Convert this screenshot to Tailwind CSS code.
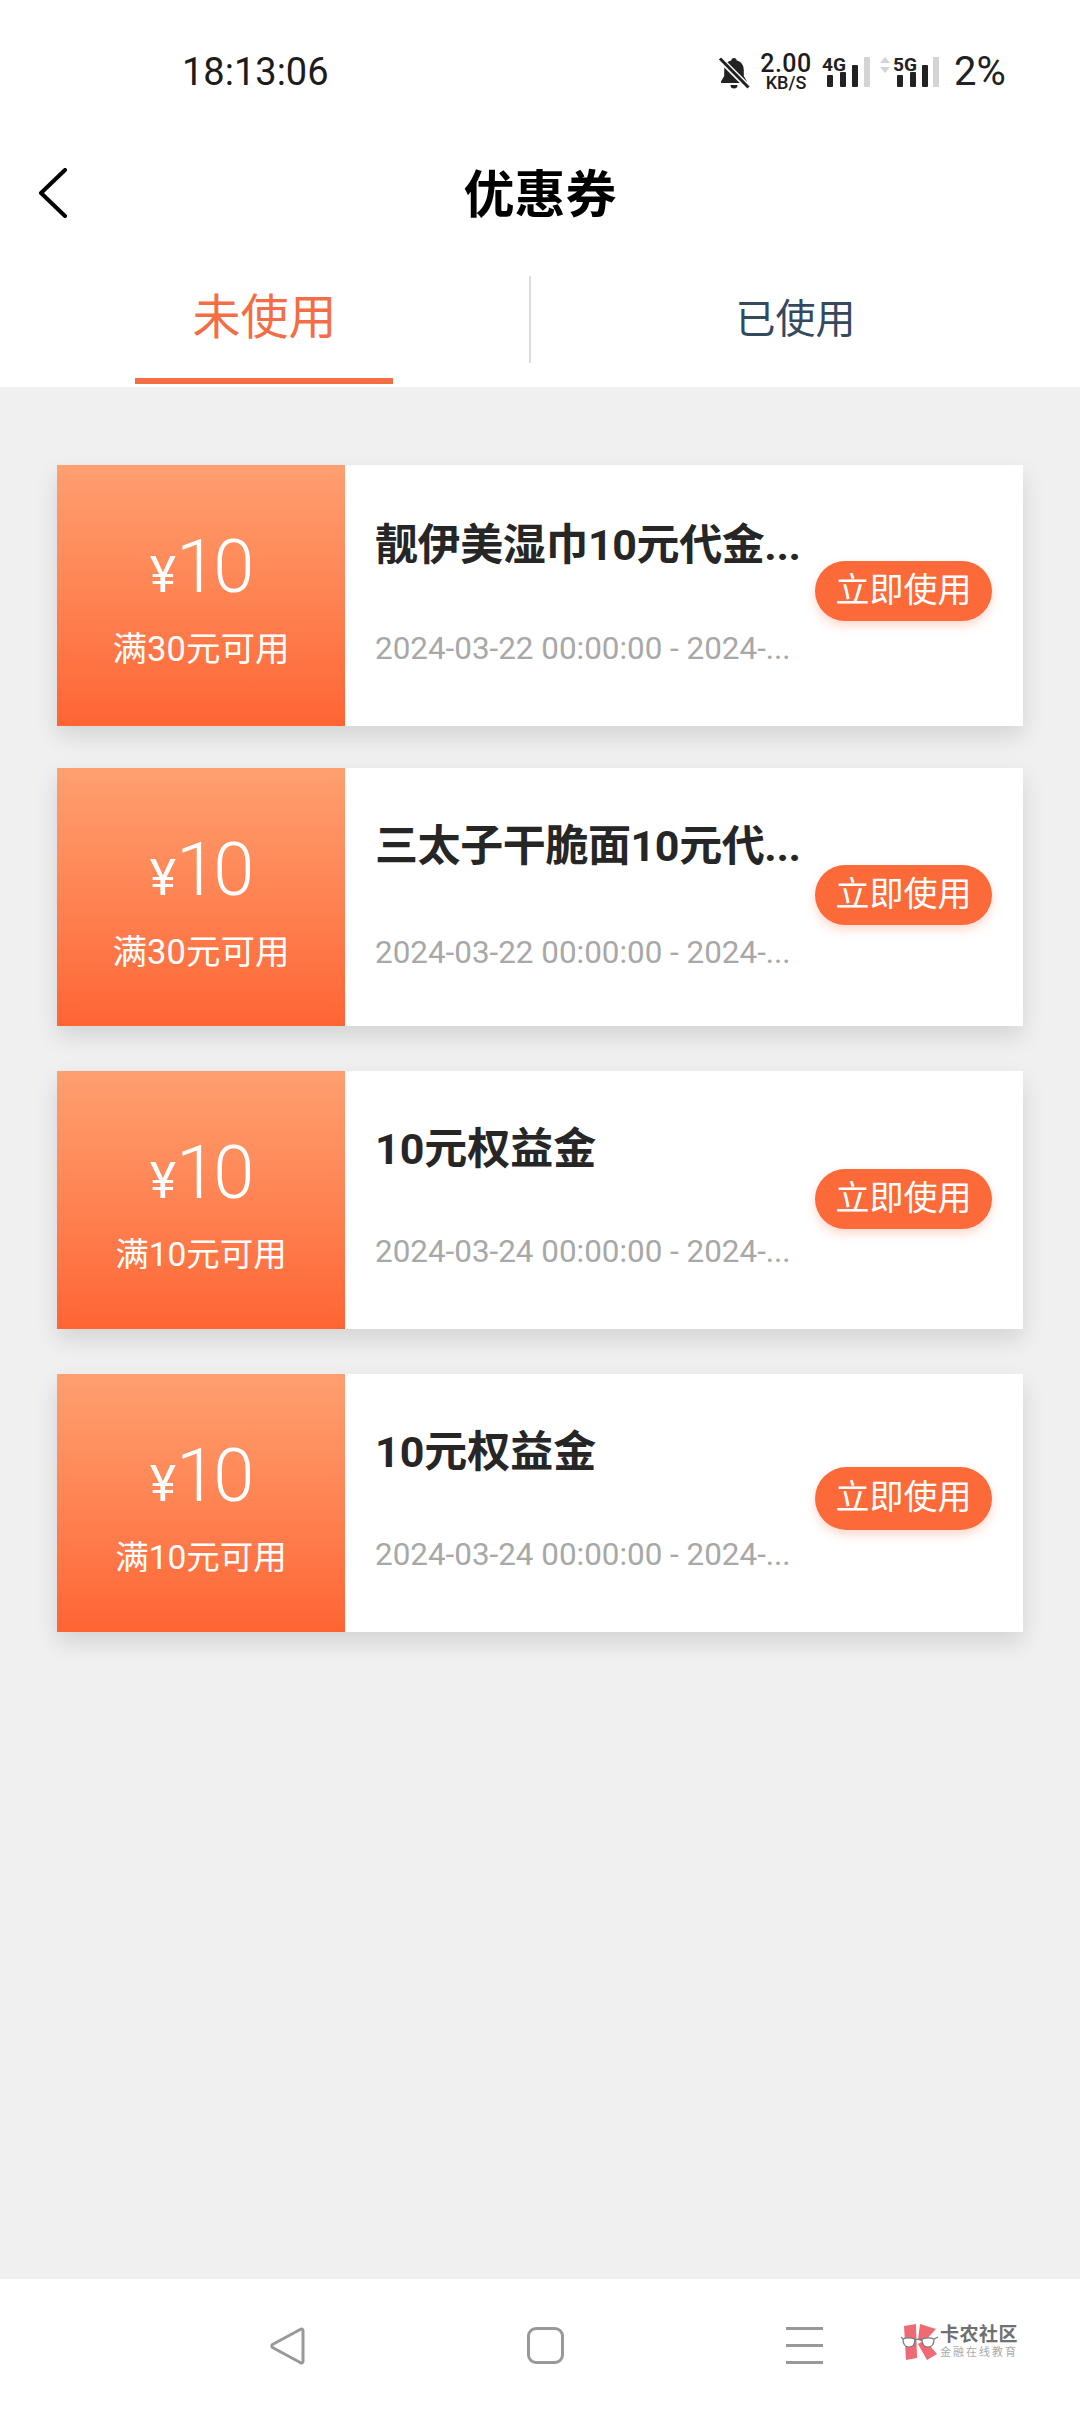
<!doctype html>
<html lang="zh"><head><meta charset="utf-8"><script src="https://cdn.jsdelivr.net/npm/@tailwindcss/browser@4"></script></head>
<body class="m-0">
<div class="w-[1080px] h-[2412px] flex flex-col bg-[#f0f0f0] font-['Roboto','Noto_Sans_CJK_SC',sans-serif] overflow-hidden">
  <div class="bg-white shrink-0">
    <!-- status bar -->
    <div class="h-[143px] flex items-start pt-[50px] text-[#1c1c1c]">
      <div class="ml-[182px] w-[536px] text-[38px] leading-[44px] font-['Roboto']">18:13:06</div>
      <svg class="mt-[7px]" width="32" height="32" viewBox="0 0 32 32"><path d="M16 1c1.600 0 2.600 1 2.800 2.400 4.600 1.200 7 5 7 9.600v6l3.200 5.500v1.500H3v-1.500l3.200-5.500v-6c0-4.600 2.400-8.400 7-9.600C13.400 2 14.400 1 16 1z" fill="#222"/><path d="M12.500 28h7a3.500 3.500 0 0 1-7 0z" fill="#222"/><path d="M2 2l28 28" stroke="#fff" stroke-width="6"/><path d="M2 1.500l28.500 29" stroke="#222" stroke-width="3"/></svg>
      <div class="ml-[10px] w-[52px] flex flex-col items-center mt-[3px]">
        <span class="text-[25px] leading-[21px] font-medium tracking-[0.5px]">2.00</span>
        <span class="text-[18px] leading-[17px] font-medium">KB/S</span>
      </div>
      <svg class="ml-[10px] -mt-[1px]" width="48" height="40" viewBox="0 -6 48 40"><text x="0" y="16" font-family="Roboto" font-size="19" font-weight="700" fill="#222" textLength="24" lengthAdjust="spacingAndGlyphs">4G</text><rect x="5" y="20" width="6" height="12" rx="1" fill="#222"/><rect x="18" y="17" width="6" height="15" rx="1" fill="#222"/><rect x="30" y="10" width="6" height="22" rx="1" fill="#222"/><rect x="42" y="2" width="6" height="30" rx="1" fill="#d4d4d4"/></svg>
      <svg class="ml-[10px] -mt-[1px]" width="60" height="40" viewBox="0 -6 60 40"><path d="M5 2l5 6H0zM5 18l5-6H0z" fill="#d4d4d4"/><text x="13" y="16" font-family="Roboto" font-size="19" font-weight="700" fill="#222" textLength="24" lengthAdjust="spacingAndGlyphs">5G</text><rect x="17" y="20" width="6" height="12" rx="1" fill="#222"/><rect x="30" y="17" width="6" height="15" rx="1" fill="#222"/><rect x="42" y="10" width="6" height="22" rx="1" fill="#222"/><rect x="53" y="2" width="6" height="30" rx="1" fill="#d4d4d4"/></svg>
      <span class="ml-[14px] text-[40px] leading-[44px] font-['Roboto'] text-[#222]">2%</span>
    </div>
    <!-- title -->
    <div class="relative h-[100px] flex items-center justify-center">
      <svg class="absolute left-[36px] top-[25px]" width="32" height="50" viewBox="0 0 32 50"><path d="M29 2L5 25l24 23" fill="none" stroke="#000" stroke-width="4" stroke-linecap="round" stroke-linejoin="round"/></svg>
      <h1 class="text-[51px] leading-[60px] font-bold text-black pt-[6px]">优惠券</h1>
    </div>
    <!-- tabs -->
    <div class="h-[144px] flex pt-[33px]">
      <div class="w-[529px] flex flex-col items-center">
        <div class="h-[78px] w-[258px] text-center text-[48px] leading-[84px] text-[#f46e45] mb-[24px]">未使用</div>
        <div class="h-[6px] w-[258px] bg-[#f46e45] -ml-[1px]"></div>
      </div>
      <div class="w-[2px] h-[87px] bg-[#dcdcdc]"></div>
      <div class="flex-1 text-center text-[40px] leading-[60px] pt-[14px] pr-[20px] text-[#34495e]">已使用</div>
    </div>
  </div>
  <!-- coupons -->
  <main class="flex-1 px-[57px] pt-[78px] flex flex-col gap-[45px]">
    <article class="h-[261px] -mb-[3px] flex bg-white shadow-[0_10px_22px_rgba(0,0,0,0.12)]">
      <div class="w-[288px] shrink-0 flex flex-col items-center bg-gradient-to-b from-[#ff9f6f] to-[#ff6433] text-white pt-[57px]">
        <div class="flex items-baseline leading-[90px]"><span class="text-[50px] pl-[2px]">¥</span><span class="text-[74px] font-light tracking-[-4px] pr-[4px]">10</span></div>
        <div class="text-[34.5px] leading-[44px] mt-[7px]">满30元可用</div>
      </div>
      <div class="flex-1 flex items-center pl-[30px] pr-[30px]">
        <div class="w-[440px] self-start pt-[50px]">
          <div class="text-[43px] leading-[60px] font-bold text-[#262626] tracking-[-0.4px] whitespace-nowrap">靓伊美湿巾10元代金...</div>
          <div class="text-[31.4px] leading-[40px] mt-[54px] text-[#a8a8a8] whitespace-nowrap">2024-03-22 00:00:00 - 2024-...</div>
        </div>
        <div class="w-[177px] h-[60px] mb-[9px] rounded-full bg-[#fd6a3a] text-white text-center text-[34px] leading-[58px] shadow-[0_5px_10px_rgba(253,106,58,0.25)] shrink-0 whitespace-nowrap">立即使用</div>
      </div>
    </article>
    <article class="h-[258px] flex bg-white shadow-[0_10px_22px_rgba(0,0,0,0.12)]">
      <div class="w-[288px] shrink-0 flex flex-col items-center bg-gradient-to-b from-[#ff9f6f] to-[#ff6433] text-white pt-[57px]">
        <div class="flex items-baseline leading-[90px]"><span class="text-[50px] pl-[2px]">¥</span><span class="text-[74px] font-light tracking-[-4px] pr-[4px]">10</span></div>
        <div class="text-[34.5px] leading-[44px] mt-[7px]">满30元可用</div>
      </div>
      <div class="flex-1 flex items-center pl-[30px] pr-[30px]">
        <div class="w-[440px] self-start pt-[48px]">
          <div class="text-[43px] leading-[60px] font-bold text-[#262626] tracking-[-0.4px] whitespace-nowrap">三太子干脆面10元代...</div>
          <div class="text-[31.4px] leading-[40px] mt-[57px] text-[#a8a8a8] whitespace-nowrap">2024-03-22 00:00:00 - 2024-...</div>
        </div>
        <div class="w-[177px] h-[60px] mb-[4px] rounded-full bg-[#fd6a3a] text-white text-center text-[34px] leading-[58px] shadow-[0_5px_10px_rgba(253,106,58,0.25)] shrink-0 whitespace-nowrap">立即使用</div>
      </div>
    </article>
    <article class="h-[258px] flex bg-white shadow-[0_10px_22px_rgba(0,0,0,0.12)]">
      <div class="w-[288px] shrink-0 flex flex-col items-center bg-gradient-to-b from-[#ff9f6f] to-[#ff6433] text-white pt-[57px]">
        <div class="flex items-baseline leading-[90px]"><span class="text-[50px] pl-[2px]">¥</span><span class="text-[74px] font-light tracking-[-4px] pr-[4px]">10</span></div>
        <div class="text-[33.5px] leading-[44px] mt-[7px]">满10元可用</div>
      </div>
      <div class="flex-1 flex items-center pl-[30px] pr-[30px]">
        <div class="w-[440px] self-start pt-[48px]">
          <div class="text-[43px] leading-[60px] font-bold text-[#262626] whitespace-nowrap">10元权益金</div>
          <div class="text-[31.4px] leading-[40px] mt-[53px] text-[#a8a8a8] whitespace-nowrap">2024-03-24 00:00:00 - 2024-...</div>
        </div>
        <div class="w-[177px] h-[60px] mb-[3px] rounded-full bg-[#fd6a3a] text-white text-center text-[34px] leading-[58px] shadow-[0_5px_10px_rgba(253,106,58,0.25)] shrink-0 whitespace-nowrap">立即使用</div>
      </div>
    </article>
    <article class="h-[258px] flex bg-white shadow-[0_10px_22px_rgba(0,0,0,0.12)]">
      <div class="w-[288px] shrink-0 flex flex-col items-center bg-gradient-to-b from-[#ff9f6f] to-[#ff6433] text-white pt-[57px]">
        <div class="flex items-baseline leading-[90px]"><span class="text-[50px] pl-[2px]">¥</span><span class="text-[74px] font-light tracking-[-4px] pr-[4px]">10</span></div>
        <div class="text-[33.5px] leading-[44px] mt-[7px]">满10元可用</div>
      </div>
      <div class="flex-1 flex items-center pl-[30px] pr-[30px]">
        <div class="w-[440px] self-start pt-[48px]">
          <div class="text-[43px] leading-[60px] font-bold text-[#262626] whitespace-nowrap">10元权益金</div>
          <div class="text-[31.4px] leading-[40px] mt-[53px] text-[#a8a8a8] whitespace-nowrap">2024-03-24 00:00:00 - 2024-...</div>
        </div>
        <div class="w-[177px] h-[63px] mb-[9px] rounded-full bg-[#fd6a3a] text-white text-center text-[34px] leading-[61px] shadow-[0_5px_10px_rgba(253,106,58,0.25)] shrink-0 whitespace-nowrap">立即使用</div>
      </div>
    </article>
  </main>
  <!-- nav -->
  <nav class="h-[133px] shrink-0 bg-white flex items-start pt-[48px] pl-[270px]">
    <svg width="36" height="38" viewBox="0 0 36 38"><path d="M33 3.500V34.500c0 1.500-1.500 2-2.800 1L2.500 20.500c-1-.8-1-2.200 0-3L30.200 2.500C31.500 1.500 33 2 33 3.500z" fill="none" stroke="#999" stroke-width="3" stroke-linejoin="round"/></svg>
    <div class="ml-[221px] w-[37px] h-[37px] rounded-[9px] border-[3px] border-[#999]"></div>
    <div class="ml-[222px] w-[37px] h-[37px] flex flex-col justify-between">
      <div class="h-[3px] bg-[#999]"></div><div class="h-[3px] bg-[#999]"></div><div class="h-[3px] bg-[#999]"></div>
    </div>
    <svg class="ml-[78px] -mt-[3px]" width="38" height="36" viewBox="0 0 38 36"><path d="M3 2l12-2 1 34-11 2z" fill="#ee6a74"/><path d="M19 0l16 5-12 13-6-2zM17 20l7-4 12 14-10 6z" fill="#ee6a74"/><path d="M2 15c4-2 9-1 12 0 0 5-2 8-6 8s-6-3-6-8zM21 15c3-1 8-2 12 0 0 5-2 8-6 8s-6-3-6-8z" fill="#fff" stroke="#777" stroke-width="1.200"/><path d="M14 16c2-1 5-1 7 0M0 13l2 2M33 15l4-2" fill="none" stroke="#777" stroke-width="1.200"/></svg>
    <div class="ml-[1px] -mt-[3px] flex flex-col w-[80px]">
      <span class="text-[19px] leading-[22px] font-bold text-[#707070] tracking-[0.5px] whitespace-nowrap">卡农社区</span>
      <span class="text-[11px] leading-[14px] text-[#aaaaaa] tracking-[2px] whitespace-nowrap">金融在线教育</span>
    </div>
  </nav>
</div>
</body></html>
